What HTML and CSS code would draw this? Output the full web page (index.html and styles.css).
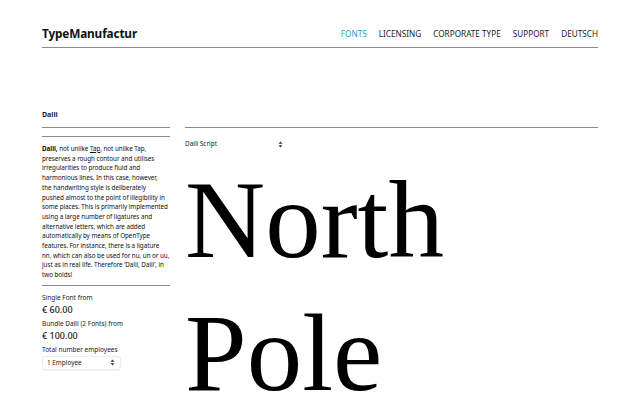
FILE: index.html
```html
<!DOCTYPE html>
<html lang="en">
<head>
<meta charset="utf-8">
<title>Dalli – TypeManufactur</title>
<link rel="stylesheet" href="styles.css">
</head>
<body>
<div class="page">
  <header class="site-header">
    <div class="logo">TypeManufactur</div>
    <nav class="nav">
      <a class="nav-link active" href="#">Fonts</a>
      <a class="nav-link" href="#">Licensing</a>
      <a class="nav-link" href="#">Corporate Type</a>
      <a class="nav-link" href="#">Support</a>
      <a class="nav-link" href="#">Deutsch</a>
    </nav>
  </header>

  <h1 class="font-title">Dalli</h1>

  <div class="font-layout">
    <aside class="info">
      <div class="info-rule"></div>
      <p class="description"><b>Dalli,</b> not unlike <u>Tap</u>, not unlike Tap,<br>preserves a rough contour and utilises<br>irregularities to produce fluid and<br>harmonious lines. In this case, however,<br>the handwriting style is deliberately<br>pushed almost to the point of illegibility in<br>some places. This is primarily implemented<br>using a large number of ligatures and<br>alternative letters, which are added<br>automatically by means of OpenType<br>features. For instance, there is a ligature<br>nn, which can also be used for nu, un or uu,<br>just as in real life. Therefore ‘Dalli, Dalli’, in<br>two bolds!</p>
      <div class="pricing">
        <div class="label">Single Font from</div>
        <div class="price">€ 60.00</div>
        <div class="label">Bundle Dalli (2 Fonts) from</div>
        <div class="price">€ 100.00</div>
        <div class="label">Total number employees</div>
        <div class="select boxed">
          <span>1 Employee</span>
          <svg class="arrows" width="5" height="7" viewBox="0 0 5 7"><path d="M0.5 2.8 L2.5 0.6 L4.5 2.8 Z M0.5 4.2 L2.5 6.4 L4.5 4.2 Z" fill="#333"/></svg>
        </div>
      </div>
    </aside>

    <section class="tester">
      <div class="select plain">
        <span>Dalli Script</span>
        <svg class="arrows" width="5" height="7" viewBox="0 0 5 7"><path d="M0.5 2.8 L2.5 0.6 L4.5 2.8 Z M0.5 4.2 L2.5 6.4 L4.5 4.2 Z" fill="#333"/></svg>
      </div>
      <div class="sample">North<br>Pole</div>
    </section>
  </div>
</div>
</body>
</html>
```

FILE: styles.css
```css
html, body {
  margin: 0;
  padding: 0;
  background: #fff;
}
body {
  font-family: "Noto Sans", "Open Sans", sans-serif;
  color: #1a1a1a;
  overflow: hidden;
}
.page {
  padding: 0 42px;
}
.site-header {
  box-sizing: border-box;
  height: 48px;
  padding-top: 19px;
  border-bottom: 1px solid #8a8a8a;
  display: flex;
  align-items: center;
  justify-content: space-between;
}
.logo {
  font-size: 11.8px;
  font-weight: 700;
  letter-spacing: -0.15px;
  color: #111;
}
.nav {
  display: flex;
  gap: 12px;
}
.nav-link {
  font-size: 8.2px;
  text-transform: uppercase;
  text-decoration: none;
  color: #1a1a1a;
}
.nav-link.active {
  color: #2f98dc;
}
.font-title {
  margin: 61px 0 6px;
  font-size: 7px;
  line-height: 12px;
  font-weight: 700;
}
.font-layout {
  display: grid;
  grid-template-columns: 128px 1fr;
  gap: 15px;
}
.info {
  border-top: 1px solid #8a8a8a;
}
.info-rule {
  margin-top: 8px;
  border-top: 1px solid #8a8a8a;
}
.description {
  margin: 7px 0 0;
  font-size: 6.3px;
  line-height: 9.7px;
  white-space: nowrap;
  letter-spacing: -0.04px;
  padding-bottom: 5px;
  border-bottom: 1px solid #8a8a8a;
  color: #111;
}
.description u {
  text-decoration-thickness: 0.5px;
}
.pricing {
  padding-top: 7px;
}
.label {
  font-size: 6.5px;
  line-height: 10px;
}
.price + .label {
  margin-top: 2px;
}
.price {
  font-size: 9px;
  line-height: 14px;
  font-weight: 500;
}
.select {
  display: flex;
  align-items: center;
  justify-content: space-between;
  font-size: 6.4px;
  color: #222;
}
.select.boxed {
  box-sizing: border-box;
  margin-top: 1px;
  width: 79px;
  height: 14px;
  padding: 0 5px 0 4px;
  border: 1px solid #ececec;
  border-radius: 3px;
  box-shadow: 0 1px 1px rgba(0,0,0,0.05);
}
.select.plain {
  margin-top: 11px;
  width: 98px;
  height: 10px;
  line-height: 10px;
}
.arrows {
  display: block;
}
.tester {
  border-top: 1px solid #8a8a8a;
}
.sample {
  margin-top: 4px;
  font-family: "Liberation Serif", "Times New Roman", serif;
  font-size: 111px;
  line-height: 133px;
  color: #000;
}
```
